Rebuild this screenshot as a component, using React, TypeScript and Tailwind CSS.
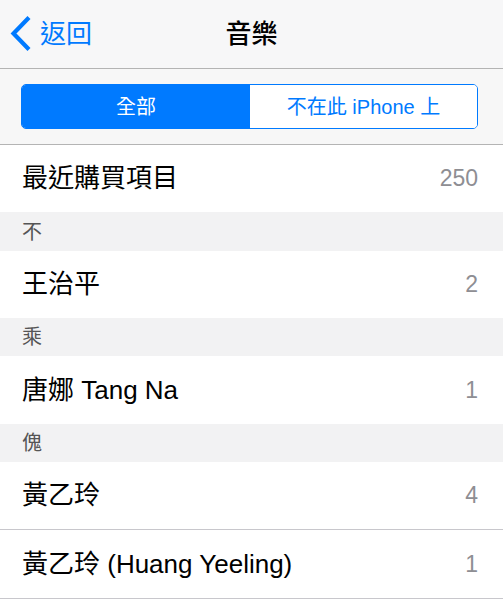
import React from "react";

const font = { fontFamily: '"Liberation Sans", "Noto Sans CJK TC", sans-serif' };

type Item =
  | { kind: "row"; title: string; count: string; h: string; border?: boolean }
  | { kind: "header"; title: string; h: string };

const items: Item[] = [
  { kind: "row", title: "最近購買項目", count: "250", h: "h-[67px]" },
  { kind: "header", title: "不", h: "h-[39px]" },
  { kind: "row", title: "王治平", count: "2", h: "h-[67px]" },
  { kind: "header", title: "乘", h: "h-[38px]" },
  { kind: "row", title: "唐娜 Tang Na", count: "1", h: "h-[68px]" },
  { kind: "header", title: "傀", h: "h-[38px]" },
  { kind: "row", title: "黃乙玲", count: "4", h: "h-[68px]", border: true },
  { kind: "row", title: "黃乙玲 (Huang Yeeling)", count: "1", h: "h-[69px]", border: true },
];

export default function App() {
  return (
    <div className="w-[503px] h-[600px] bg-white overflow-hidden" style={font}>
      <div className="relative h-[69px] bg-[#f7f7f8] border-b border-[#b4b4b4] flex items-center">
        <div className="absolute left-0 top-0 h-full flex items-center">
          <svg width="40" height="68" viewBox="0 0 40 68" className="shrink-0">
            <path d="M29 17.5 L13.5 33.5 L29 49.5" fill="none" stroke="#007aff" strokeWidth="4.2" strokeLinecap="butt" strokeLinejoin="miter" />
          </svg>
          <span className="text-[26px] text-[#007aff] leading-none">返回</span>
        </div>
        <div className="flex-1 text-center text-[26px] font-medium text-black leading-none">音樂</div>
      </div>
      <div className="h-[76px] bg-[#f7f7f7] border-b border-[#b4b4b4] pl-[21px] pr-[25px] pt-[15px]">
        <div className="flex h-[45px] rounded-[5px] border border-[#007aff] overflow-hidden">
          <div className="w-[228px] bg-[#007aff] text-white text-[20px] flex items-center justify-center">全部</div>
          <div className="flex-1 bg-white text-[#007aff] text-[20px] flex items-center justify-center">不在此 iPhone 上</div>
        </div>
      </div>
      {items.map((it, i) =>
        it.kind === "header" ? (
          <div key={i} className={`${it.h} bg-[#f2f2f3] flex items-center pl-[22px] text-[20px] text-[#555555]`}>
            {it.title}
          </div>
        ) : (
          <div
            key={i}
            className={`${it.h} flex items-center justify-between pl-[22px] pr-[25px] ${it.border ? "border-b border-[#c8c7cc]" : ""}`}
          >
            <span className="text-[26px] text-black">{it.title}</span>
            <span className="text-[23px] text-[#8e8e93]">{it.count}</span>
          </div>
        )
      )}
    </div>
  );
}
